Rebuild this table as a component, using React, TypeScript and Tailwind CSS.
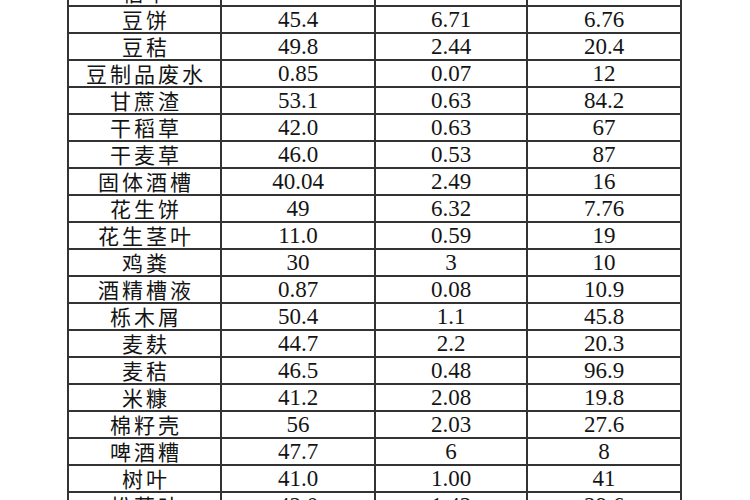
const ROWS: [string, string, string, string][] = [
  ["稻草", "42.3", "0.72", "58.7"],
  ["豆饼", "45.4", "6.71", "6.76"],
  ["豆秸", "49.8", "2.44", "20.4"],
  ["豆制品废水", "0.85", "0.07", "12"],
  ["甘蔗渣", "53.1", "0.63", "84.2"],
  ["干稻草", "42.0", "0.63", "67"],
  ["干麦草", "46.0", "0.53", "87"],
  ["固体酒槽", "40.04", "2.49", "16"],
  ["花生饼", "49", "6.32", "7.76"],
  ["花生茎叶", "11.0", "0.59", "19"],
  ["鸡粪", "30", "3", "10"],
  ["酒精槽液", "0.87", "0.08", "10.9"],
  ["栎木屑", "50.4", "1.1", "45.8"],
  ["麦麸", "44.7", "2.2", "20.3"],
  ["麦秸", "46.5", "0.48", "96.9"],
  ["米糠", "41.2", "2.08", "19.8"],
  ["棉籽壳", "56", "2.03", "27.6"],
  ["啤酒糟", "47.7", "6", "8"],
  ["树叶", "41.0", "1.00", "41"],
  ["松落叶", "42.0", "1.42", "29.6"],
];

const cell = "flex items-center justify-center border-l-2 border-t-2 border-[#333333]";
const num = "font-['Liberation_Serif',serif] text-[23px] leading-none text-[#141414]";

export default function App() {
  return (
    <div className="w-[750px] h-[500px] overflow-hidden bg-white">
      <div className="-mt-[22px] ml-[67px] w-[615px]">
        {ROWS.map(([name, c, n, ratio]) => (
          <div key={name} className="grid h-[27px] grid-cols-[153px_154px_152px_156px]">
            <div className={cell}>
              <span className="pl-[3px] font-['Noto_Sans_CJK_SC',sans-serif] text-[21px] leading-none tracking-[3px] text-[#141414]">
                {name}
              </span>
            </div>
            <div className={cell}>
              <span className={num}>{c}</span>
            </div>
            <div className={cell}>
              <span className={num}>{n}</span>
            </div>
            <div className={cell + " border-r-2"}>
              <span className={num}>{ratio}</span>
            </div>
          </div>
        ))}
      </div>
    </div>
  );
}
